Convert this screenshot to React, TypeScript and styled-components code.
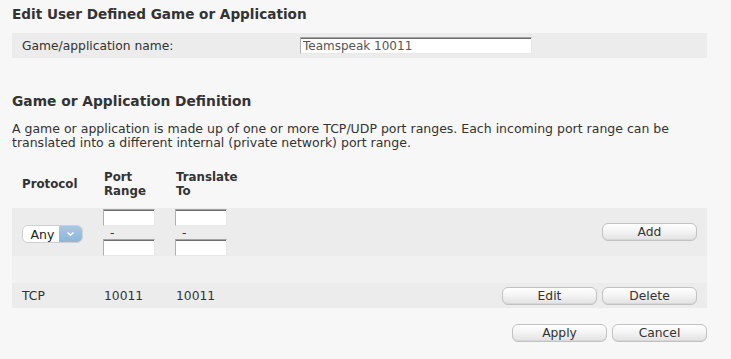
import React from "react";
import styled, { createGlobalStyle } from "styled-components";

const Global = createGlobalStyle`
  html, body { margin: 0; padding: 0; background: #f7f7f7; }
  body { font-family: "DejaVu Sans", Verdana, sans-serif; font-size: 12.3px; color: #333; }
  * { box-sizing: border-box; }
`;

const Page = styled.div`
  width: 731px;
  height: 359px;
  padding: 6px 24px 0 12px;
  display: flex;
  flex-direction: column;
`;

const Title = styled.h2<{ $size?: number }>`
  margin: 0;
  height: 27px;
  font-size: ${(p) => p.$size ?? 13.6}px;
  font-weight: bold;
  line-height: 16px;
  color: #333;
`;

const FieldRow = styled.div`
  height: 25px;
  background: #ececec;
  display: flex;
  align-items: center;
  padding-left: 10px;
`;

const Label = styled.span`
  width: 278px;
`;

const TextInput = styled.input<{ $w: number }>`
  width: ${(p) => p.$w}px;
  height: 17px;
  margin: 0;
  padding: 1px 2px 0;
  font-family: inherit;
  font-size: 12px;
  color: #555;
  background: #fff;
  border-style: solid;
  border-width: 1px;
  border-color: #a3a3a3 #e8e8e8 #e8e8e8 #b0b0b0;
  box-shadow: inset 0 1px 0 #6e6e6e;
  outline: none;
`;

const SectionTitle = styled(Title)`
  margin-top: 35px;
  height: 29px;
`;

const Description = styled.p`
  margin: 0;
  font-size: 12.5px;
  line-height: 14px;
  height: 42px;
`;

const Grid = styled.div`
  display: grid;
  grid-template-columns: 82px 72px 72px 1fr;
`;

const HeadCell = styled.div`
  height: 44px;
  padding-left: 10px;
  padding-bottom: 4px;
  display: flex;
  align-items: center;
  font-weight: bold;
  font-size: 11.8px;
  line-height: 14px;
`;

const EntryRow = styled.div<{ $bg: string; $h: number }>`
  grid-column: 1 / -1;
  display: grid;
  grid-template-columns: 82px 72px 72px 1fr;
  height: ${(p) => p.$h}px;
  background: ${(p) => p.$bg};
  align-items: center;
`;

const Cell = styled.div`
  padding-left: 10px;
  display: flex;
  align-items: center;
`;

const RangeCell = styled.div`
  padding-left: 9px;
  display: flex;
  flex-direction: column;
  height: 100%;
  padding-top: 1px;
`;

const Dash = styled.div`
  height: 13px;
  line-height: 14px;
  padding-left: 7px;
`;

const ButtonCell = styled.div`
  display: flex;
  justify-content: flex-end;
  gap: 5px;
  padding-right: 10px;
`;

const Button = styled.button`
  width: 95px;
  height: 18px;
  margin: 0;
  padding: 0;
  font-family: inherit;
  font-size: 12.3px;
  line-height: 16px;
  color: #333;
  border: 1px solid #c2c2c2;
  border-radius: 6px;
  background: linear-gradient(#ffffff 0%, #f4f4f4 45%, #e2e2e2 100%);
  box-shadow: inset 0 -1px 0 #d8d8d8;
  cursor: pointer;
`;

const Select = styled.div`
  width: 61px;
  height: 18px;
  display: flex;
  border: 1px solid #cfcfcf;
  border-radius: 6px;
  overflow: hidden;
  margin-top: 4px;
`;

const SelectValue = styled.span`
  flex: 1;
  background: #fff;
  display: flex;
  align-items: center;
  justify-content: center;
  padding-left: 3px;
  font-size: 12.5px;
  color: #222;
`;

const SelectArrow = styled.span`
  width: 23px;
  background: linear-gradient(#a6c8e4, #8db6d9);
  display: flex;
  align-items: center;
  justify-content: center;
`;

const Footer = styled.div`
  display: flex;
  justify-content: flex-end;
  gap: 5px;
  margin-top: 16px;
`;

export default function App() {
  return (
    <Page>
      <Global />
      <Title>Edit User Defined Game or Application</Title>
      <FieldRow>
        <Label>Game/application name:</Label>
        <TextInput $w={232} defaultValue="Teamspeak 10011" />
      </FieldRow>

      <SectionTitle $size={13.8}>Game or Application Definition</SectionTitle>
      <Description>
        A game or application is made up of one or more TCP/UDP port ranges. Each incoming port range can be
        translated into a different internal (private network) port range.
      </Description>

      <Grid>
        <HeadCell>Protocol</HeadCell>
        <HeadCell>
          Port
          <br />
          Range
        </HeadCell>
        <HeadCell>
          Translate
          <br />
          To
        </HeadCell>
        <HeadCell />

        <EntryRow $bg="#ececec" $h={48}>
          <Cell>
            <Select>
              <SelectValue>Any</SelectValue>
              <SelectArrow>
                <svg width="9" height="6" viewBox="0 0 9 6">
                  <path d="M1.5 1.5 L4.5 4.2 L7.5 1.5" fill="none" stroke="#fff" strokeWidth="1.6" />
                </svg>
              </SelectArrow>
            </Select>
          </Cell>
          <RangeCell>
            <TextInput $w={52} />
            <Dash>-</Dash>
            <TextInput $w={52} />
          </RangeCell>
          <RangeCell>
            <TextInput $w={52} />
            <Dash>-</Dash>
            <TextInput $w={52} />
          </RangeCell>
          <ButtonCell>
            <Button>Add</Button>
          </ButtonCell>
        </EntryRow>

        <EntryRow $bg="#f1f1f1" $h={27} />

        <EntryRow $bg="#ececec" $h={25}>
          <Cell>TCP</Cell>
          <Cell>10011</Cell>
          <Cell>10011</Cell>
          <ButtonCell>
            <Button>Edit</Button>
            <Button>Delete</Button>
          </ButtonCell>
        </EntryRow>
      </Grid>

      <Footer>
        <Button>Apply</Button>
        <Button>Cancel</Button>
      </Footer>
    </Page>
  );
}
